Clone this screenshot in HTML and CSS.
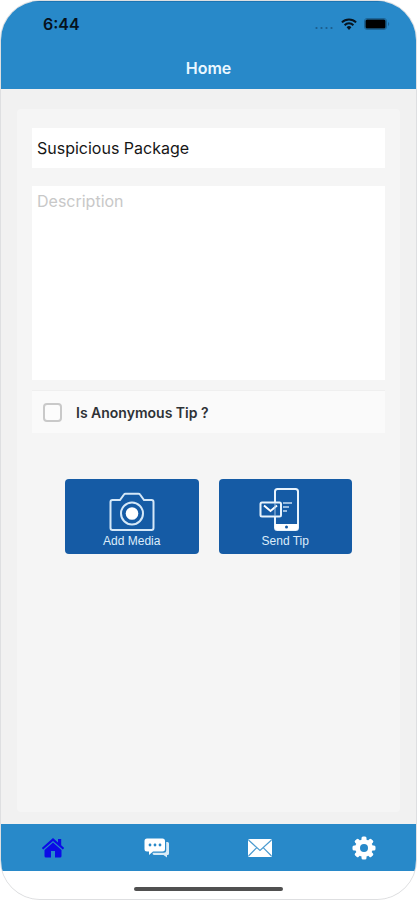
FILE: index.html
```html
<!DOCTYPE html>
<html lang="en">
<head>
<meta charset="utf-8">
<meta name="viewport" content="width=device-width, initial-scale=1">
<title>Home</title>
<link rel="stylesheet" href="styles.css">
</head>
<body>
<div class="phone">
  <header class="header">
    <div class="status">
      <span class="time">6:44</span>
      <span class="indicators">
        <svg class="signal" width="20" height="12" viewBox="0 0 20 12" aria-hidden="true"><g fill="#1c5d8c"><circle cx="2.5" cy="10" r="1.1"/><circle cx="7.5" cy="10" r="1.1"/><circle cx="12.5" cy="10" r="1.1"/><circle cx="17.5" cy="10" r="1.1"/></g></svg>
        <svg width="16" height="12" viewBox="0 0 16 12" aria-hidden="true"><g fill="none" stroke="#07141f" stroke-width="2"><path d="M.9 4.4a10 10 0 0 1 14.2 0"/><path d="M3.6 7.2a6.2 6.2 0 0 1 8.8 0"/></g><path d="M8 12 5.6 9.3a3.4 3.4 0 0 1 4.8 0Z" fill="#07141f"/></svg>
        <svg width="26" height="12" viewBox="0 0 26 12" aria-hidden="true"><rect x=".5" y=".5" width="22" height="11" rx="2.5" fill="none" stroke="#1c6496"/><rect x="1.5" y="1.5" width="20" height="9" rx="1.5" fill="#000"/><path d="M24 4v4c1.6-.6 1.6-3.4 0-4Z" fill="#1c6496"/></svg>
      </span>
    </div>
    <h1 class="title">Home</h1>
  </header>

  <main class="main">
    <form class="card">
      <input class="field subject" type="text" aria-label="Tip subject" value="Suspicious Package">
      <textarea class="field description" aria-label="Description" placeholder="Description"></textarea>
      <label class="anonymous"><input class="check" type="checkbox"><span>Is Anonymous Tip ?</span></label>
      <div class="actions">
        <button class="action" type="button">
          <svg width="60" height="46" viewBox="0 0 60 46" aria-hidden="true"><g fill="none" stroke="#d5e8f8" stroke-width="2"><path d="M10.500 13H18l4-5.500q.5-.8 1.500-.8h13q1 0 1.500.8l4 5.500h7.500a2 2 0 0 1 2 2v26a2 2 0 0 1-2 2h-39a2 2 0 0 1-2-2V15a2 2 0 0 1 2-2Z"/><circle cx="30" cy="26.500" r="11"/></g><circle cx="30" cy="26.500" r="6.300" fill="#fff"/></svg>
          <span>Add Media</span>
        </button>
        <button class="action" type="button">
          <svg width="60" height="46" viewBox="0 0 60 46" aria-hidden="true"><path d="M20 15V4.500A2.500 2.500 0 0 1 22.500 2h18A2.500 2.500 0 0 1 43 4.500v36a2.500 2.500 0 0 1-2.500 2.500h-18a2.500 2.500 0 0 1-2.500-2.500V30" fill="none" stroke="#e8f3fc" stroke-width="2"/><path d="M20 37h23v4q0 2-2 2H22q-2 0-2-2Z" fill="#fff"/><circle cx="31.500" cy="40" r="1.500" fill="#155ba5"/><rect x="5.500" y="15.500" width="20.500" height="14" rx="1.500" fill="none" stroke="#e8f3fc" stroke-width="2"/><path d="m9 18.500 6.500 5.500 6.500-5.500" fill="none" stroke="#fff" stroke-width="2"/><path d="M20 16v13" stroke="#a8c8e6" stroke-width="1"/><path d="M28 16h9M28 20h6M28 24h4" stroke="#c5ddf2" stroke-width="1.500"/></svg>
          <span>Send Tip</span>
        </button>
      </div>
    </form>
  </main>

  <nav class="tabs" aria-label="Main">
    <a class="tab active" href="#home" aria-label="Home"><svg width="24" height="24" viewBox="0 0 24 24"><g fill="currentColor"><path d="M12 2 .8 12l1.400 1.600L12 5l9.800 8.600 1.400-1.600-3-2.700V3H17v3.500Z"/><path d="m12 6.500-8.500 7.400V20q0 1.500 1.500 1.500h5V15h4v6.500h5q1.500 0 1.500-1.500v-6.100Z"/></g></svg></a>
    <a class="tab" href="#chat" aria-label="Chat"><svg width="26" height="24" viewBox="0 0 26 24"><path d="M22.200 6h1.300A1.500 1.500 0 0 1 25 7.500v10a1.500 1.500 0 0 1-1.500 1.500H23v2.500L19.500 19H10q-1.500 0-1.500-2.200H20q2.200 0 2.200-2.300Z" fill="#d8ebf7"/><path d="M3 2.500h15.500A2.500 2.500 0 0 1 21 5v8a2.500 2.500 0 0 1-2.500 2.500H9L5 19v-3.500H3A2.500 2.500 0 0 1 .5 13V5A2.500 2.500 0 0 1 3 2.500Z" fill="#fff"/><g fill="#2889c9"><circle cx="6" cy="9" r="1.400"/><circle cx="11" cy="9" r="1.400"/><circle cx="16" cy="9" r="1.400"/></g></svg></a>
    <a class="tab" href="#mail" aria-label="Mail"><svg width="24" height="18" viewBox="0 0 24 18"><rect width="24" height="18" rx="1.500" fill="#fff"/><path d="m.5 1 11.500 10.500L23.500 1M.5 17 8.800 8.600M23.500 17l-8.300-8.400" fill="none" stroke="#4b9bd0" stroke-width="1.200"/></svg></a>
    <a class="tab" href="#settings" aria-label="Settings"><svg width="24" height="24" viewBox="0 0 24 24"><g fill="#fff"><g id="teeth"><rect x="9.500" y=".5" width="5" height="23" rx="1.500"/><rect x=".5" y="9.500" width="23" height="5" rx="1.500"/></g><use href="#teeth" transform="rotate(45 12 12)"/><circle cx="12" cy="12" r="8.800"/></g><circle cx="12" cy="12" r="4" fill="#2889c9"/></svg></a>
  </nav>
  <footer class="footer"><span class="home-bar"></span></footer>
</div>
</body>
</html>
```
FILE: styles.css
```css
* {
  box-sizing: border-box;
}

body {
  margin: 0;
  background: #fff;
  font-family: Inter, "Liberation Sans", sans-serif;
}

.phone {
  display: flex;
  flex-direction: column;
  min-height: 100vh;
  overflow: hidden;
  border: 1px solid #dedfe1;
  border-radius: 40px;
  background: #f1f1f1;
}

.header {
  height: 88px;
  background: #2889c9;
  box-shadow: inset 0 1px #1d75b3;
}

.status {
  display: flex;
  align-items: center;
  justify-content: space-between;
  height: 46px;
  padding: 0 26px 0 42px;
}

.time {
  color: #06121c;
  font-size: 16px;
  font-weight: 600;
}

.indicators {
  display: flex;
  align-items: center;
  gap: 7px;
}

.title {
  margin: 0;
  color: #eaf7ff;
  font-size: 16px;
  font-weight: 600;
  line-height: 42px;
  text-align: center;
}

.main {
  display: flex;
  flex: 1;
  padding: 20px 16px 12px;
}

.card {
  flex: 1;
  min-width: 0;
  padding: 19px 15px;
  border-radius: 4px;
  background: #f5f5f5;
}

.field {
  display: block;
  width: 100%;
  border: 0;
  border-radius: 0;
  outline: 0;
  background: #fff;
  color: #161616;
  font-family: inherit;
  font-size: 16px;
}

.subject {
  height: 40px;
  padding: 0 5px;
}

.description {
  height: 194px;
  margin-top: 18px;
  padding: 5px;
  line-height: 20px;
  resize: none;
}

.description::placeholder {
  color: #c8c8c8;
  opacity: 1;
}

.anonymous {
  display: flex;
  align-items: center;
  gap: 14px;
  height: 43px;
  margin-top: 10px;
  padding: 0 11px;
  border-top: 1px solid #efefef;
  background: #fafafa;
  color: #2e3236;
  font-size: 14px;
  font-weight: 600;
}

.check {
  width: 19px;
  height: 19px;
  margin: 0;
  border: 2px solid #c9c9c9;
  border-radius: 4px;
  appearance: none;
  background: #fcfcfc;
}

.check:checked {
  background: #155ba5;
}

.actions {
  display: grid;
  grid-template-columns: 1fr 1fr;
  gap: 20px;
  margin-top: 46px;
  padding: 0 33px;
}

.action {
  display: flex;
  flex-direction: column;
  align-items: center;
  height: 75px;
  padding: 8px 0 0;
  border: 0;
  border-radius: 4px;
  background: #155ba5;
  color: #dcecfa;
  font-family: "Liberation Sans", sans-serif;
  font-size: 12px;
  line-height: 16px;
}

.tabs {
  display: grid;
  grid-template-columns: repeat(4, 1fr);
  height: 47px;
  background: #2889c9;
}

.tab {
  display: flex;
  align-items: center;
  justify-content: center;
  color: #fff;
}

.tab.active {
  color: #0b0be6;
}

.footer {
  display: flex;
  justify-content: center;
  height: 28px;
  padding-top: 16px;
  background: #fff;
}

.home-bar {
  width: 36%;
  height: 4px;
  border-radius: 2px;
  background: #505050;
}
```
